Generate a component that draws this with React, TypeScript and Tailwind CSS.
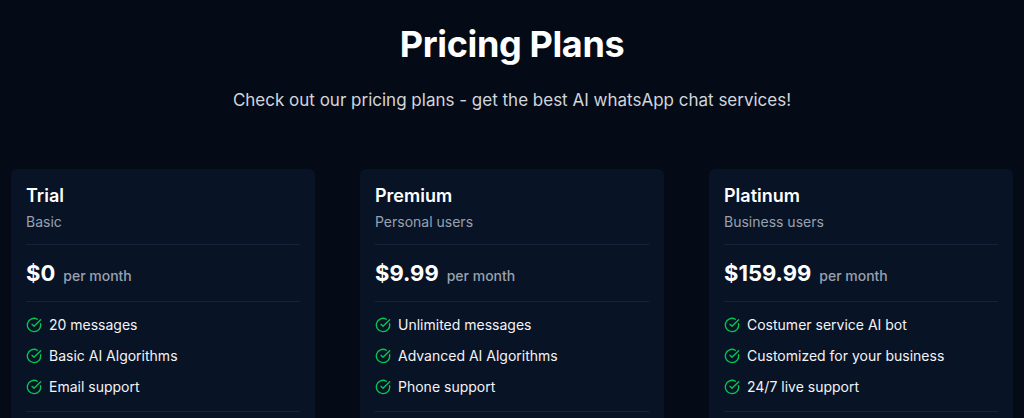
import { CircleCheckBig } from "lucide-react";

const plans = [
  {
    name: "Trial",
    audience: "Basic",
    price: "$0",
    features: ["20 messages", "Basic AI Algorithms", "Email support"],
  },
  {
    name: "Premium",
    audience: "Personal users",
    price: "$9.99",
    features: ["Unlimited messages", "Advanced AI Algorithms", "Phone support"],
  },
  {
    name: "Platinum",
    audience: "Business users",
    price: "$159.99",
    features: ["Costumer service AI bot", "Customized for your business", "24/7 live support"],
  },
];

export default function App() {
  return (
    <div
      className="min-h-screen bg-[#050b16] text-white"
      style={{ fontFamily: "Inter, 'Noto Sans', sans-serif" }}
    >
      {/* ── Heading ── */}
      <div className="flex flex-col items-center pt-[22px]">
        <h1 className="text-[36px] leading-[44px] font-bold tracking-[-0.01em]">Pricing Plans</h1>
        <p className="mt-[21px] text-[17px] leading-[26px] text-gray-300">
          Check out our pricing plans - get the best AI whatsApp chat services!
        </p>
      </div>

      {/* ── Cards ── */}
      <div className="grid grid-cols-3 gap-[45px] px-[11px] mt-[56px]">
        {plans.map((plan) => (
          <div key={plan.name} className="bg-[#081326] rounded-md px-[15px] pt-[13px] pb-10">
            <h3 className="text-lg leading-[28px] font-semibold">{plan.name}</h3>
            <p className="text-sm leading-5 text-gray-400 mt-[2px]">{plan.audience}</p>

            <div className="border-t border-[#13233c] mt-[12px]" />

            <div className="flex items-baseline gap-2 py-[12px]">
              <span className="text-[22px] leading-[32px] font-bold">{plan.price}</span>
              <span className="text-sm text-gray-400 font-medium">per month</span>
            </div>

            <div className="border-t border-[#13233c]" />

            <ul className="flex flex-col gap-[11px] pt-[13px] pb-[14px]">
              {plan.features.map((f) => (
                <li key={f} className="flex items-center gap-[7px] text-sm leading-5 text-gray-100">
                  <CircleCheckBig className="w-4 h-4 text-green-500" strokeWidth={2} />
                  {f}
                </li>
              ))}
            </ul>

            <div className="border-t border-[#13233c]" />
          </div>
        ))}
      </div>
    </div>
  );
}
